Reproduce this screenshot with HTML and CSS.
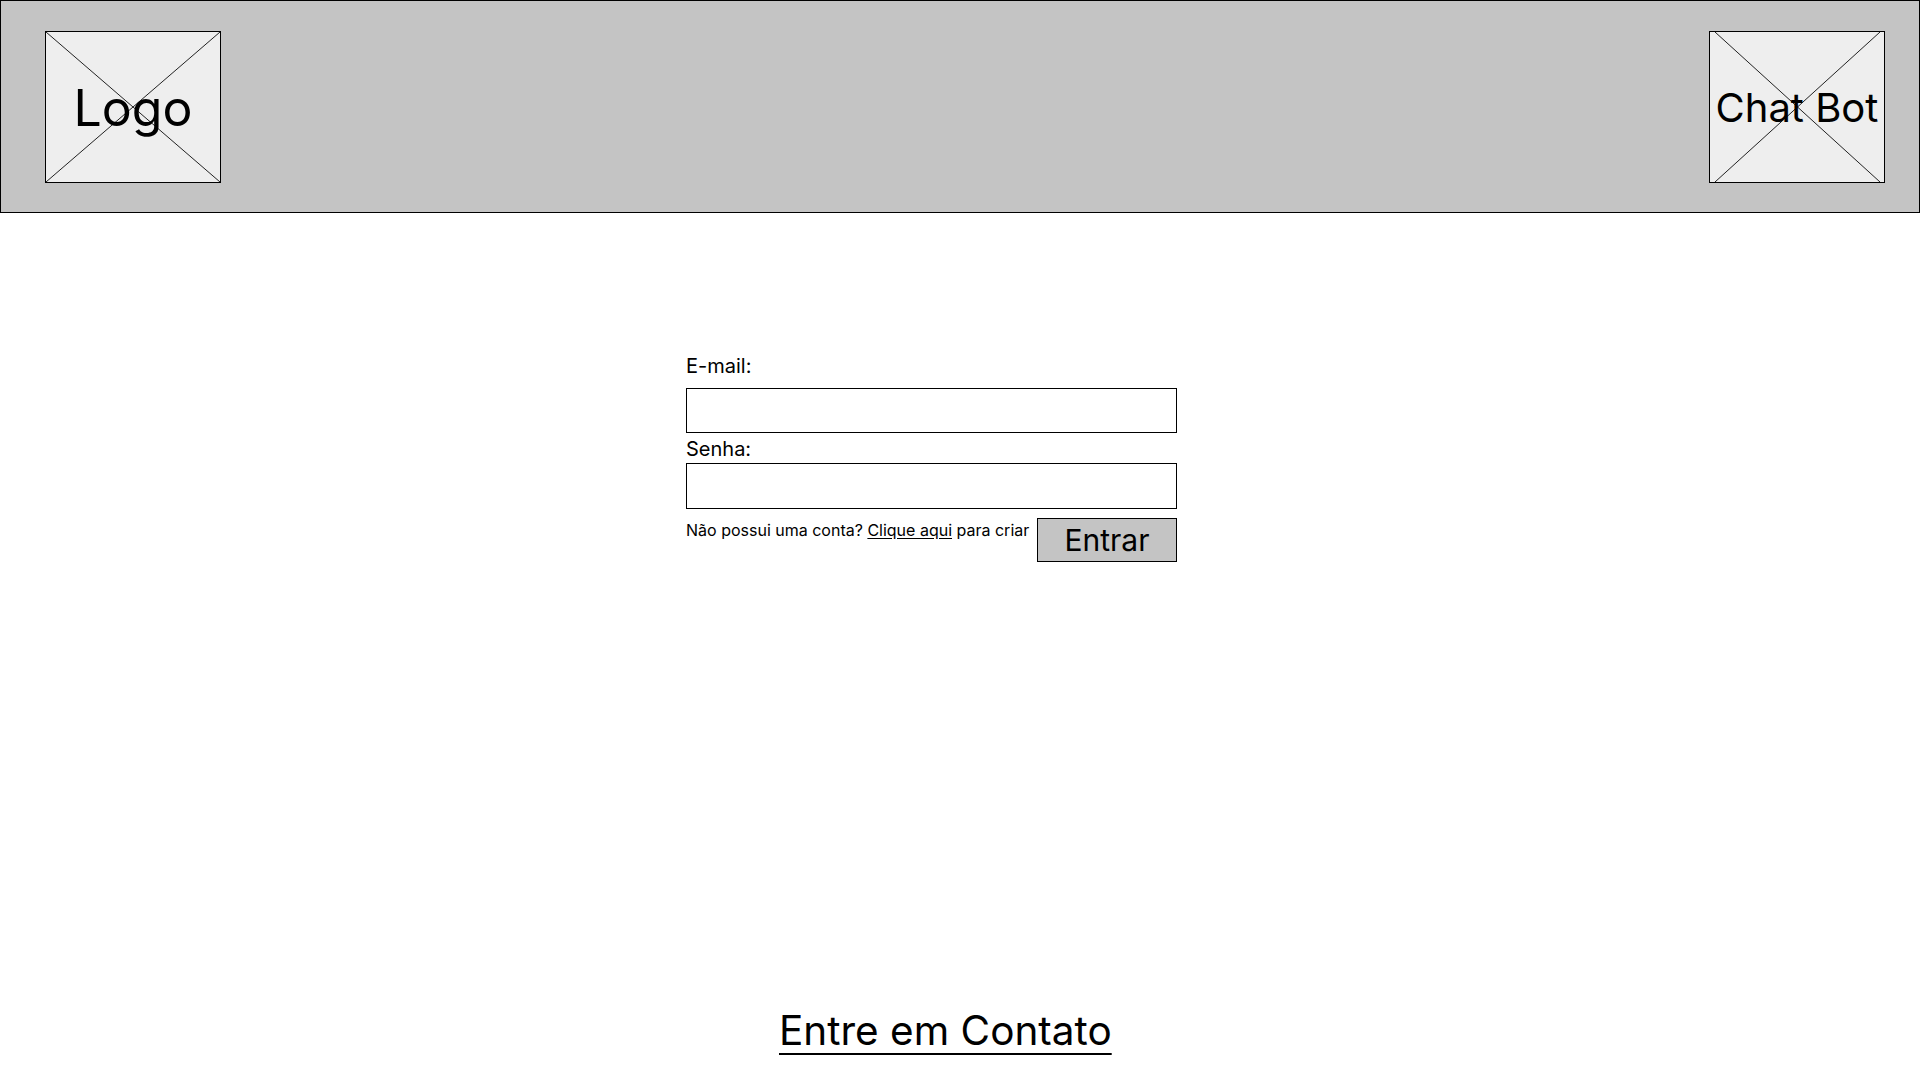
FILE: index.html
```html
<!DOCTYPE html>
<html lang="pt-BR">
<head>
<meta charset="utf-8">
<title>Login</title>
<link rel="stylesheet" href="styles.css">
</head>
<body>
<header class="topbar">
  <div class="placeholder">
    <svg class="cross" viewBox="0 0 174 150" preserveAspectRatio="none"><line x1="0" y1="0" x2="174" y2="150"/><line x1="174" y1="0" x2="0" y2="150"/></svg>
    <span class="ph-text logo-text">Logo</span>
  </div>
  <div class="placeholder">
    <svg class="cross" viewBox="0 0 174 150" preserveAspectRatio="none"><line x1="5" y1="0" x2="170" y2="150"/><line x1="170" y1="0" x2="5" y2="150"/></svg>
    <span class="ph-text bot-text">Chat Bot</span>
  </div>
</header>
<main class="content">
  <form class="login">
    <label class="field-label label-email" for="email">E-mail:</label>
    <input class="field" id="email" type="email">
    <label class="field-label label-senha" for="senha">Senha:</label>
    <input class="field field-senha" id="senha" type="password">
    <div class="actions">
      <p class="signup">Não possui uma conta? <a href="#" class="signup-link">Clique aqui</a> para criar</p>
      <button type="button" class="btn">Entrar</button>
    </div>
  </form>
</main>
<footer class="footer">
  <a href="#" class="contact">Entre em Contato</a>
</footer>
</body>
</html>
```

FILE: styles.css
```css
* { box-sizing: border-box; }
html, body { margin: 0; padding: 0; }
body {
  font-family: Inter, "Noto Sans", sans-serif;
  color: #000;
  background: #fff;
  min-height: 1080px;
  display: flex;
  flex-direction: column;
}
.topbar {
  height: 213px;
  background: #c4c4c4;
  border: 1px solid #000;
  display: flex;
  align-items: center;
  justify-content: space-between;
  padding: 0 34px 0 44px;
}
.placeholder {
  position: relative;
  width: 176px;
  height: 152px;
  background: #eeeeee;
  border: 1px solid #000;
  display: flex;
  align-items: center;
  justify-content: center;
}
.cross {
  position: absolute;
  inset: 0;
  width: 100%;
  height: 100%;
}
.cross line { stroke: #222; stroke-width: 1; vector-effect: non-scaling-stroke; }
.ph-text { position: relative; line-height: 1; white-space: nowrap; }
.logo-text { font-size: 50px; margin-top: 2px; }
.bot-text { font-size: 40px; margin-top: 2px; }
.content {
  flex: 1;
  padding-top: 142px;
  padding-left: 686px;
}
.login {
  width: 491px;
  display: flex;
  flex-direction: column;
}
.field-label {
  font-size: 20px;
  line-height: 23px;
}
.field {
  display: block;
  width: 100%;
  height: 45px;
  border: 1px solid #000;
  border-radius: 0;
  background: #fff;
  margin: 10px 0 5px;
  padding: 0 8px;
  font: inherit;
}
.field-senha { height: 46px; margin: 2px 0 9px; }
.actions {
  display: flex;
  justify-content: space-between;
  align-items: flex-start;
}
.signup {
  margin: 0;
  padding-top: 3px;
  font-size: 16px;
  line-height: 19px;
}
.signup-link { color: #000; text-decoration: underline; text-underline-offset: 2px; }
.btn {
  width: 140px;
  height: 44px;
  background: #c4c4c4;
  border: 1px solid #000;
  border-radius: 0;
  font-family: inherit;
  font-size: 30px;
  line-height: 1;
  color: #000;
  padding: 0;
}
.footer {
  padding: 0 0 25px 779px;
}
.contact {
  font-size: 40.5px;
  line-height: 48px;
  color: #000;
  text-decoration: underline;
  text-decoration-thickness: 2px;
  text-underline-offset: 8px;
}
```
